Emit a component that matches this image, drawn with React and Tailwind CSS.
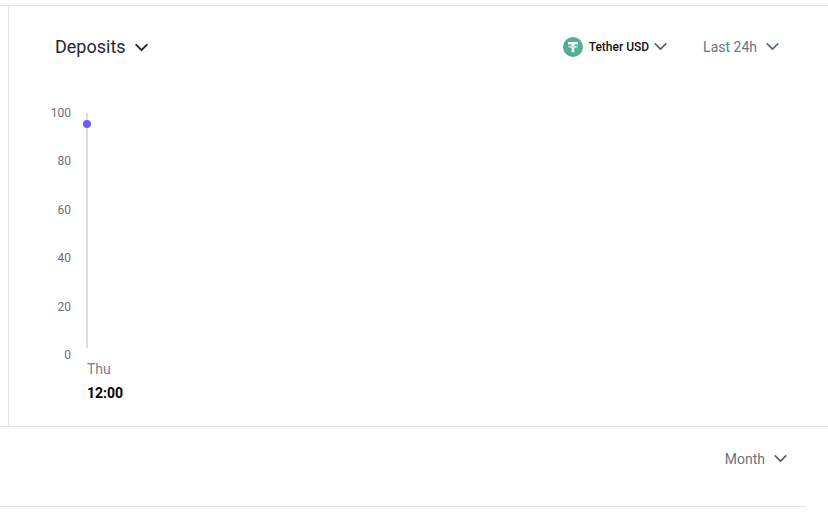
import { ChevronDown } from "lucide-react";

const ticks = [100, 80, 60, 40, 20, 0];

function Tether() {
  return (
    <svg width="20" height="20" viewBox="0 0 20 20">
      <circle cx="10" cy="10" r="10" fill="#50AF95" />
      <path d="M5 5h10v2.400h-3.700v1.300c2.100.1 3.700.6 3.700 1.100s-1.600 1-3.700 1.100v4.300H8.700v-4.300c-2.100-.1-3.700-.6-3.700-1.100s1.600-1 3.700-1.100V7.400H5z" fill="#fff" />
      <path d="M6 9.700c1.500.5 6.500.5 8 0" stroke="#50AF95" strokeWidth=".6" fill="none" />
    </svg>
  );
}

export default function App() {
  return (
    <div className="h-[516px] w-[828px] overflow-hidden bg-white pt-[5px] font-['Roboto',sans-serif]">
      <div className="h-[422px] border-y border-[#e6e6e6]">
        <div className="ml-[8px] h-full border-l border-[#e6e6e6] pl-[46px] pr-[45px]">
          <div className="flex h-[80px] items-start justify-between pt-[28px]">
            <div className="flex items-center gap-[5px]">
              <span className="text-[18px] leading-[26px] text-[#1f2933]">Deposits</span>
              <ChevronDown size={21} strokeWidth={2.2} className="text-[#2b2320]" />
            </div>
            <div className="flex items-center pt-[2px]">
              <Tether />
              <span className="ml-[6px] text-[12px] font-medium leading-[20px] text-[#111]">Tether USD</span>
              <ChevronDown size={21} strokeWidth={2} className="ml-px text-[#59626e]" />
              <span className="ml-[32px] text-[14px] leading-[20px] text-[#6b7280]">Last 24h</span>
              <ChevronDown size={21} strokeWidth={2} className="ml-[5px] text-[#5b6b85]" />
            </div>
          </div>
          <div className="mt-[20px] flex">
            <div className="flex h-[256px] w-[16px] flex-col items-end justify-between">
              {ticks.map((t) => (
                <span key={t} className="text-[12px] leading-[14px] text-[#6e6e6e]">{t}</span>
              ))}
            </div>
            <div className="relative ml-[15px]">
              <div className="mt-[7px] h-[235px] w-[2px] bg-[#dcdcdc]" />
              <div className="absolute left-[-3.500px] top-[14px] h-[8px] w-[8px] rounded-full bg-[#6c5cff]" />
              <div className="mt-[12px] pl-px text-[14px] leading-[18px] text-[#7b7f85]">Thu</div>
              <div className="mt-[6px] pl-px text-[14px] font-bold leading-[18px] text-black">12:00</div>
            </div>
          </div>
        </div>
      </div>
      <div className="h-[80px] w-[806px] border-b border-[#e6e6e6]">
        <div className="flex w-[828px] items-center justify-end pr-[37px] pt-[21px]">
          <span className="text-[14px] leading-[20px] text-[#6b7280]">Month</span>
          <ChevronDown size={21} strokeWidth={2} className="ml-[5px] text-[#59626e]" />
        </div>
      </div>
    </div>
  );
}
